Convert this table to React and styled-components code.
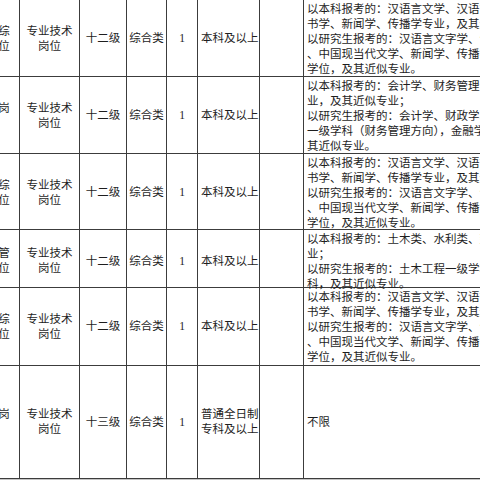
import React from 'react';
import styled, { createGlobalStyle } from 'styled-components';

const GlobalStyle = createGlobalStyle`
  html, body {
    margin: 0;
    padding: 0;
    background: #ffffff;
  }
`;

// Окно просмотра, таблица обрезана по краям
const Viewport = styled.div`
  width: 480px;
  height: 480px;
  overflow: hidden;
  background: #c4c4c4;
`;

const Table = styled.div`
  display: flex;
  flex-direction: column;
  width: 900px;
  margin-left: -24px;
  background: #ffffff;
  font-family: "Liberation Serif", "Noto Sans CJK SC", serif;
  font-size: 11.5px;
  line-height: 15px;
  color: #1e1e1e;
`;

const Row = styled.div`
  display: grid;
  grid-template-columns: 44px 60px 47px 40px 31px 62px 44px 1fr;
  height: ${(p) => p.$h}px;
  border-bottom: 1px solid #3c3c3c;
  box-sizing: border-box;
`;

const Cell = styled.div`
  display: flex;
  flex-direction: column;
  justify-content: ${(p) => (p.$top ? 'flex-start' : 'center')};
  align-items: ${(p) => (p.$left ? 'flex-start' : 'center')};
  text-align: ${(p) => (p.$left ? 'left' : 'center')};
  padding: ${(p) => (p.$top ? '2px 0 0 3px' : p.$left ? '0 0 0 3px' : '0')};
  border-right: 1px solid #3c3c3c;
  box-sizing: border-box;
  white-space: pre;
  overflow: visible;
  min-width: 0;
`;

// Первый столбец: название должности, видна только правая часть
const NameCell = styled(Cell)`
  padding-right: 10px;
`;

const Number = styled.span`
  font-family: "Liberation Serif", serif;
`;

const lit = `以本科报考的：汉语言文学、汉语言文学、秘
书学、新闻学、传播学专业，及其近似专业；
以研究生报考的：汉语言文字学、语言学及应用语言学
、中国现当代文学、新闻学、传播学专业硕士
学位，及其近似专业。`;

const acc = `以本科报考的：会计学、财务管理专
业，及其近似专业；
以研究生报考的：会计学、财政学、会计
一级学科（财务管理方向），金融学，及
其近似专业。`;

const civil = `以本科报考的：土木类、水利类、建筑类专
业；
以研究生报考的：土木工程一级学科学
科，及其近似专业。`;

const rows = [
  { h: 77, name: '文字综\n合岗位', level: '十二级', edu: '本科及以上', major: lit },
  { h: 77, name: '会计岗\n位', level: '十二级', edu: '本科及以上', major: acc },
  { h: 76, name: '文字综\n合岗位', level: '十二级', edu: '本科及以上', major: lit },
  { h: 58, name: '工程管\n理岗位', level: '十二级', edu: '本科及以上', major: civil },
  { h: 78, name: '文字综\n合岗位', level: '十二级', edu: '本科及以上', major: lit },
  { h: 113, name: '综合岗\n位', level: '十三级', edu: '普通全日制\n专科及以上', major: '不限', center: true },
];

const App = () => (
  <>
    <GlobalStyle />
    <Viewport>
      <Table>
        {rows.map((r, i) => (
          <Row key={i} $h={r.h}>
            <NameCell>{r.name}</NameCell>
            <Cell>{'专业技术\n岗位'}</Cell>
            <Cell>{r.level}</Cell>
            <Cell>综合类</Cell>
            <Cell>
              <Number>1</Number>
            </Cell>
            <Cell $left>{r.edu}</Cell>
            <Cell />
            <Cell $left $top={!r.center}>
              {r.major}
            </Cell>
          </Row>
        ))}
      </Table>
    </Viewport>
  </>
);

export default App;
